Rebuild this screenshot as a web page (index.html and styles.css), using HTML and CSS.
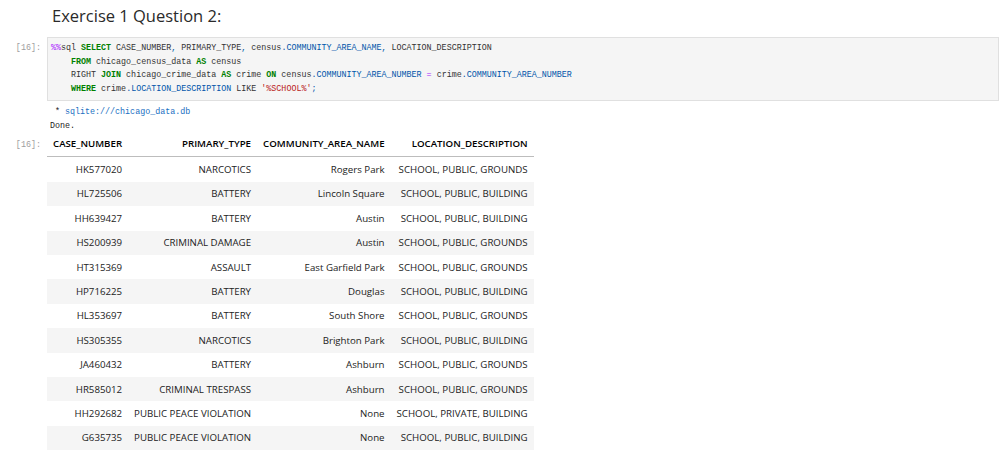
FILE: index.html
```html
<!DOCTYPE html>
<html>
<head>
<meta charset="utf-8">
<link rel="stylesheet" href="styles.css">
</head>
<body>
<div class="md-cell"><h2 class="heading">Exercise 1 Question 2:</h2></div>

<div class="cell">
  <div class="prompt in-prompt">[16]:</div>
  <div class="editor">
<pre class="code"><span class="op">%%</span>sql <span class="kw">SELECT</span> CASE_NUMBER<span class="pn">,</span> PRIMARY_TYPE<span class="pn">,</span> census<span class="pn">.</span><span class="v2">COMMUNITY_AREA_NAME</span><span class="pn">,</span> LOCATION_DESCRIPTION
    <span class="kw">FROM</span> chicago_census_data <span class="kw">AS</span> census
    RIGHT <span class="kw">JOIN</span> chicago_crime_data <span class="kw">AS</span> crime <span class="kw">ON</span> census<span class="pn">.</span><span class="v2">COMMUNITY_AREA_NUMBER</span> <span class="op">=</span> crime<span class="pn">.</span><span class="v2">COMMUNITY_AREA_NUMBER</span>
    <span class="kw">WHERE</span> crime<span class="pn">.</span><span class="v2">LOCATION_DESCRIPTION</span> LIKE <span class="str">'%SCHOOL%'</span><span class="pn">;</span></pre>
  </div>
</div>

<div class="cell out">
  <div class="prompt"></div>
  <pre class="stdout"> * <span class="link">sqlite:///chicago_data.db</span>
Done.</pre>
</div>

<div class="cell out table-cell">
  <div class="prompt out-prompt">[16]:</div>
  <table class="result">
    <thead>
      <tr><th class="left">CASE_NUMBER</th><th>PRIMARY_TYPE</th><th>COMMUNITY_AREA_NAME</th><th>LOCATION_DESCRIPTION</th></tr>
    </thead>
    <tbody>
      <tr><td>HK577020</td><td>NARCOTICS</td><td>Rogers Park</td><td>SCHOOL, PUBLIC, GROUNDS</td></tr>
      <tr><td>HL725506</td><td>BATTERY</td><td>Lincoln Square</td><td>SCHOOL, PUBLIC, BUILDING</td></tr>
      <tr><td>HH639427</td><td>BATTERY</td><td>Austin</td><td>SCHOOL, PUBLIC, BUILDING</td></tr>
      <tr><td>HS200939</td><td>CRIMINAL DAMAGE</td><td>Austin</td><td>SCHOOL, PUBLIC, GROUNDS</td></tr>
      <tr><td>HT315369</td><td>ASSAULT</td><td>East Garfield Park</td><td>SCHOOL, PUBLIC, GROUNDS</td></tr>
      <tr><td>HP716225</td><td>BATTERY</td><td>Douglas</td><td>SCHOOL, PUBLIC, BUILDING</td></tr>
      <tr><td>HL353697</td><td>BATTERY</td><td>South Shore</td><td>SCHOOL, PUBLIC, GROUNDS</td></tr>
      <tr><td>HS305355</td><td>NARCOTICS</td><td>Brighton Park</td><td>SCHOOL, PUBLIC, BUILDING</td></tr>
      <tr><td>JA460432</td><td>BATTERY</td><td>Ashburn</td><td>SCHOOL, PUBLIC, GROUNDS</td></tr>
      <tr><td>HR585012</td><td>CRIMINAL TRESPASS</td><td>Ashburn</td><td>SCHOOL, PUBLIC, GROUNDS</td></tr>
      <tr><td>HH292682</td><td>PUBLIC PEACE VIOLATION</td><td>None</td><td>SCHOOL, PRIVATE, BUILDING</td></tr>
      <tr><td>G635735</td><td>PUBLIC PEACE VIOLATION</td><td>None</td><td>SCHOOL, PUBLIC, BUILDING</td></tr>
    </tbody>
  </table>
</div>
</body>
</html>
```

FILE: styles.css
```css
html, body {
  margin: 0;
  padding: 0;
  background: #ffffff;
}

body {
  font-family: "Open Sans", "Noto Sans", sans-serif;
  color: #000;
}

.md-cell {
  padding: 5px 0 0 52px;
}

.heading {
  margin: 0;
  font-weight: 400;
  font-size: 16.5px;
  line-height: 22px;
  color: #2a2a2a;
  font-family: "Open Sans", sans-serif;
}

.cell {
  display: flex;
  align-items: flex-start;
}

.cell:nth-of-type(2) {
  margin-top: 10px;
}

.prompt {
  width: 47px;
  flex: 0 0 47px;
  box-sizing: border-box;
  padding-right: 6px;
  text-align: right;
  font-family: "Liberation Mono", "DejaVu Sans Mono", monospace;
  font-size: 8.4px;
  color: #9e9e9e;
}

.in-prompt {
  padding-top: 6px;
}

.editor {
  flex: 1 1 auto;
  margin-right: 7px;
  background: #f5f5f5;
  border: 1px solid #e0e0e0;
  padding: 4px 3px 3px 3px;
}

.code {
  margin: 0;
  font-family: "Liberation Mono", "DejaVu Sans Mono", monospace;
  font-size: 8.35px;
  line-height: 13.7px;
  color: #333;
}

.kw { color: #008000; font-weight: bold; }
.op { color: #aa22ff; }
.v2 { color: #0055aa; }
.pn { color: #0055aa; }
.str { color: #ba2121; }

.stdout {
  margin: 5px 0 0 3px;
  font-family: "Liberation Mono", "DejaVu Sans Mono", monospace;
  font-size: 8.35px;
  line-height: 13.8px;
  color: #222;
}

.link { color: #1a6fc2; }

.out-prompt {
  padding-top: 5px;
}

.table-cell {
  margin-top: 2px;
}

.result {
  border-collapse: collapse;
  font-family: "Open Sans", sans-serif;
  font-size: 9.7px;
  color: #000;
}

.result th {
  font-weight: 600;
  text-align: right;
  padding: 2px 6px 6px 6px;
  border-bottom: 1px solid #bdbdbd;
  height: 11px;
  white-space: nowrap;
}

.result th.left {
  text-align: left;
}

.result td {
  text-align: right;
  padding: 0 6px;
  height: 24.4px;
  white-space: nowrap;
  color: #222;
}

.result tbody tr:nth-child(even) {
  background: #f5f5f5;
}
```
